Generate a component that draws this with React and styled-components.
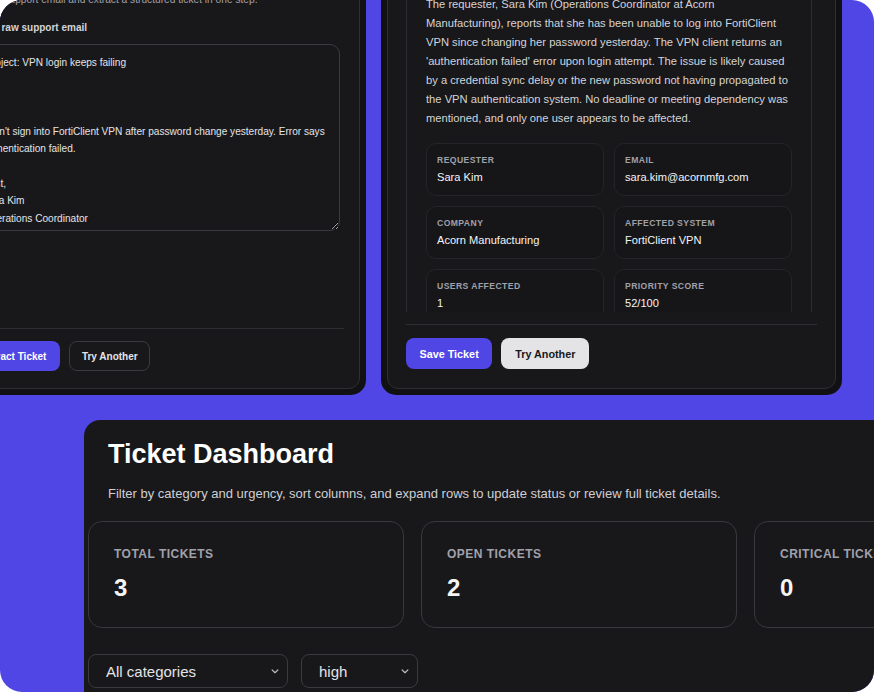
import React from 'react';
import styled, { createGlobalStyle } from 'styled-components';

const GlobalStyle = createGlobalStyle`
  html, body {
    margin: 0;
    padding: 0;
    background: #ffffff;
  }
  body {
    font-family: "Liberation Sans", Arial, sans-serif;
    -webkit-font-smoothing: antialiased;
  }
  * { box-sizing: border-box; }
`;

const Frame = styled.div`
  width: 874px;
  height: 692px;
  overflow: hidden;
  border-radius: 22px;
  background: #4f46e5;
  display: flex;
  flex-direction: column;
`;

/* upper strip: two app windows sitting side by side, bottoms aligned */
const TopRow = styled.div`
  flex: 0 0 395px;
  height: 395px;
  display: flex;
  align-items: flex-end;
  gap: 15px;
  margin-left: -55px;
`;

const Window = styled.section`
  flex: 0 0 ${(p) => p.$width}px;
  padding: 6px;
  background: #111114;
  border-radius: 15px;
`;

const Card = styled.div`
  display: flex;
  flex-direction: column;
  background: #18181b;
  border: 1px solid #2e2e33;
  border-radius: 11px;
  padding: 18px ${(p) => p.$padX}px ${(p) => p.$padBottom}px;
`;

const CardTitle = styled.h2`
  margin: 0 0 6px;
  font-size: 15px;
  font-weight: 700;
  color: #f4f4f5;
`;

const Intro = styled.p`
  margin: 0 0 13px;
  font-size: 10.2px;
  line-height: 17px;
  color: #a1a1aa;
  white-space: nowrap;
`;

const FieldLabel = styled.label`
  display: block;
  margin: 0 0 10px;
  font-size: 10px;
  line-height: 13px;
  font-weight: 700;
  color: #d4d4d8;
  white-space: nowrap;
`;

const EmailInput = styled.textarea`
  display: block;
  height: 187px;
  margin: 0 4px 0 0;
  padding: 9px 8px 7px 15px;
  background: #18181b;
  border: 1px solid #3a3a40;
  border-radius: 10px;
  color: #e4e4e7;
  font-family: "Liberation Sans", Arial, sans-serif;
  font-size: 10.1px;
  line-height: 17.3px;
  overflow: hidden;
  resize: vertical;
  outline: none;
`;

const Footer = styled.div`
  display: flex;
  gap: 9px;
  margin-top: ${(p) => p.$gapAbove}px;
  padding-top: ${(p) => p.$padTop}px;
  border-top: 1px solid #2e2e33;
`;

const Button = styled.button`
  height: ${(p) => p.$h}px;
  padding: 0 ${(p) => p.$px}px;
  border-radius: 8px;
  font-family: "Liberation Sans", Arial, sans-serif;
  font-size: ${(p) => p.$fs}px;
  font-weight: 700;
  white-space: nowrap;
  cursor: pointer;
  ${(p) =>
    p.$variant === 'primary'
      ? 'background: #4f46e5; color: #ffffff; border: none;'
      : p.$variant === 'light'
      ? 'background: #e4e4e7; color: #18181b; border: none;'
      : 'background: transparent; color: #e4e4e7; border: 1px solid #3a3a40;'}
`;

const ScrollArea = styled.div`
  flex: none;
  height: 361px;
  overflow: hidden;
`;

const ResultBox = styled.div`
  margin-right: 5px;
  padding: 19px;
  border: 1px solid #2b2b30;
  border-radius: 12px;
`;

const SectionLabel = styled.div`
  margin: 0 0 11.5px;
  font-size: 8.6px;
  line-height: 12px;
  font-weight: 700;
  letter-spacing: 0.05em;
  text-transform: uppercase;
  color: #a1a1aa;
`;

const Summary = styled.p`
  margin: 0;
  font-size: 11.2px;
  line-height: 19px;
  color: #d4d4d8;
  white-space: nowrap;
`;

const FieldGrid = styled.div`
  display: grid;
  grid-template-columns: 1fr 1fr;
  gap: 10px;
  margin-top: 15.5px;
`;

const FieldCell = styled.div`
  padding: 10px;
  background: #161619;
  border: 1px solid #242429;
  border-radius: 10px;
`;

const CellLabel = styled.div`
  font-size: 8.6px;
  line-height: 12px;
  font-weight: 700;
  letter-spacing: 0.05em;
  text-transform: uppercase;
  color: #a1a1aa;
`;

const CellValue = styled.div`
  margin-top: 4px;
  font-size: 11.1px;
  line-height: 15px;
  color: #f4f4f5;
`;

/* lower window: the dashboard */
const Dashboard = styled.section`
  flex: none;
  align-self: flex-start;
  width: 1120px;
  height: 320px;
  margin: 25px 0 0 84px;
  padding: 18px 0 0 4px;
  background: #18181b;
  border-radius: 16px;
`;

const Header = styled.header`
  margin-left: 20px;
`;

const Title = styled.h1`
  margin: 0;
  font-size: 27px;
  line-height: 32px;
  font-weight: 700;
  color: #ffffff;
`;

const Subtitle = styled.p`
  margin: 15px 0 0;
  font-size: 13px;
  line-height: 18px;
  color: #cfcfd4;
  white-space: nowrap;
`;

const StatsRow = styled.div`
  display: flex;
  gap: 17px;
  margin-top: 18px;
`;

const StatCard = styled.div`
  flex: 0 0 316px;
  padding: 25px 25px 25px;
  border: 1px solid #38383e;
  border-radius: 14px;
  background: #18181b;
`;

const StatLabel = styled.div`
  font-size: 12px;
  line-height: 15px;
  font-weight: 700;
  letter-spacing: 0.04em;
  text-transform: uppercase;
  color: #a1a1aa;
  white-space: nowrap;
`;

const StatValue = styled.div`
  margin-top: 12px;
  font-size: 24px;
  line-height: 28px;
  font-weight: 700;
  color: #f4f4f5;
`;

const Filters = styled.div`
  display: flex;
  gap: 13px;
  margin-top: 26px;
`;

const SelectWrap = styled.div`
  position: relative;
  width: ${(p) => p.$width}px;
  height: 34px;
`;

const Select = styled.select`
  width: 100%;
  height: 100%;
  padding: 0 28px 0 17px;
  appearance: none;
  -webkit-appearance: none;
  background: #18181b;
  border: 1px solid #3a3a40;
  border-radius: 8px;
  color: #e4e4e7;
  font-family: "Liberation Sans", Arial, sans-serif;
  font-size: 15px;
  outline: none;
`;

const Chevron = styled.svg`
  position: absolute;
  right: 6px;
  top: 50%;
  transform: translateY(-50%);
  pointer-events: none;
`;

const emailText = `Subject: VPN login keeps failing

Hi,

I can't sign into FortiClient VPN after password change yesterday. Error says authentication failed.

Best,
Sara Kim
Operations Coordinator`;

const summaryLines = [
  'The requester, Sara Kim (Operations Coordinator at Acorn',
  'Manufacturing), reports that she has been unable to log into FortiClient',
  'VPN since changing her password yesterday. The VPN client returns an',
  "'authentication failed' error upon login attempt. The issue is likely caused",
  'by a credential sync delay or the new password not having propagated to',
  'the VPN authentication system. No deadline or meeting dependency was',
  'mentioned, and only one user appears to be affected.',
];

const fields = [
  ['Requester', 'Sara Kim'],
  ['Email', 'sara.kim@acornmfg.com'],
  ['Company', 'Acorn Manufacturing'],
  ['Affected system', 'FortiClient VPN'],
  ['Users affected', '1'],
  ['Priority score', '52/100'],
  ['Category', 'Access / VPN'],
  ['Urgency', 'High'],
];

const stats = [
  ['Total tickets', '3'],
  ['Open tickets', '2'],
  ['Critical tickets', '0'],
];

function DropDown({ width, options }) {
  return (
    <SelectWrap $width={width}>
      <Select defaultValue={options[0]}>
        {options.map((o) => (
          <option key={o}>{o}</option>
        ))}
      </Select>
      <Chevron width="14" height="14" viewBox="0 0 24 24" fill="none" stroke="#c4c4c8" strokeWidth="2" strokeLinecap="round" strokeLinejoin="round">
        <path d="M7 10l5 5 5-5" />
      </Chevron>
    </SelectWrap>
  );
}

export default function App() {
  return (
    <>
      <GlobalStyle />
      <Frame>
        <TopRow>
          <Window $width={421}>
            <Card $padX={15} $padBottom={17}>
              <CardTitle>Ticket Extractor</CardTitle>
              <Intro>Paste a support email and extract a structured ticket in one step.</Intro>
              <FieldLabel htmlFor="raw-email">Drop a raw support email</FieldLabel>
              <EmailInput id="raw-email" readOnly defaultValue={emailText} />
              <Footer $gapAbove={97} $padTop={12}>
                <Button $variant="primary" $h={30} $px={14} $fs={10}>Extract Ticket</Button>
                <Button $variant="ghost" $h={30} $px={11.5} $fs={10}>Try Another</Button>
              </Footer>
            </Card>
          </Window>

          <Window $width={461}>
            <Card $padX={18} $padBottom={19}>
              <CardTitle>Extracted Ticket</CardTitle>
              <ScrollArea>
                <ResultBox>
                  <SectionLabel>Summary</SectionLabel>
                  <Summary>
                    {summaryLines.map((line, i) => (
                      <React.Fragment key={i}>
                        {line}
                        {i < summaryLines.length - 1 && <br />}
                      </React.Fragment>
                    ))}
                  </Summary>
                  <FieldGrid>
                    {fields.map(([label, value]) => (
                      <FieldCell key={label}>
                        <CellLabel>{label}</CellLabel>
                        <CellValue>{value}</CellValue>
                      </FieldCell>
                    ))}
                  </FieldGrid>
                </ResultBox>
              </ScrollArea>
              <Footer $gapAbove={12} $padTop={13}>
                <Button $variant="primary" $h={31} $px={13.5} $fs={10.8}>Save Ticket</Button>
                <Button $variant="light" $h={31} $px={14} $fs={10.8}>Try Another</Button>
              </Footer>
            </Card>
          </Window>
        </TopRow>

        <Dashboard>
          <Header>
            <Title>Ticket Dashboard</Title>
            <Subtitle>
              Filter by category and urgency, sort columns, and expand rows to update status or review full ticket details.
            </Subtitle>
          </Header>
          <StatsRow>
            {stats.map(([label, value]) => (
              <StatCard key={label}>
                <StatLabel>{label}</StatLabel>
                <StatValue>{value}</StatValue>
              </StatCard>
            ))}
          </StatsRow>
          <Filters>
            <DropDown width={200} options={['All categories', 'Access / VPN', 'Hardware', 'Software']} />
            <DropDown width={117} options={['high', 'medium', 'low', 'critical']} />
          </Filters>
        </Dashboard>
      </Frame>
    </>
  );
}
